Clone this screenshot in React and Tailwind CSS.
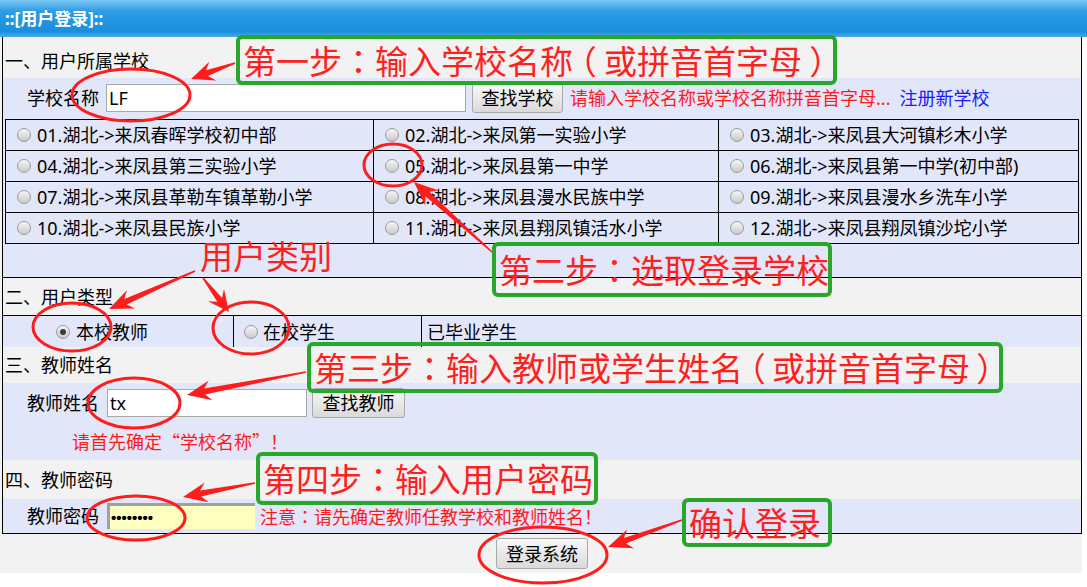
import React from "react";

const schools = [
  "01.湖北->来凤春晖学校初中部",
  "02.湖北->来凤第一实验小学",
  "03.湖北->来凤县大河镇杉木小学",
  "04.湖北->来凤县第三实验小学",
  "05.湖北->来凤县第一中学",
  "06.湖北->来凤县第一中学(初中部)",
  "07.湖北->来凤县革勒车镇革勒小学",
  "08.湖北->来凤县漫水民族中学",
  "09.湖北->来凤县漫水乡洗车小学",
  "10.湖北->来凤县民族小学",
  "11.湖北->来凤县翔凤镇活水小学",
  "12.湖北->来凤县翔凤镇沙坨小学",
];

function Radio({ checked }) {
  return (
    <span className="inline-flex w-[14px] h-[14px] shrink-0 rounded-full border border-[#9c9c9c] bg-linear-to-b from-[#f6f6f6] to-[#c9c9c9] items-center justify-center">
      {checked && <span className="w-[6px] h-[6px] rounded-full bg-[#3a3a3a]" />}
    </span>
  );
}

function Btn({ className, children }) {
  return (
    <div
      className={`flex items-center justify-center border border-[#a9a9a9] rounded-[3px] bg-linear-to-b from-[#f8f8f8] to-[#dadada] text-[18px] leading-none text-black ${className}`}
    >
      {children}
    </div>
  );
}

function arrowPoints(x1, y1, x2, y2) {
  const dx = x2 - x1;
  const dy = y2 - y1;
  const L = Math.hypot(dx, dy);
  const ux = dx / L;
  const uy = dy / L;
  const nx = -uy;
  const ny = ux;
  const head = Math.min(22, L * 0.45);
  const bx = x2 - ux * head;
  const by = y2 - uy * head;
  const sx = bx + ux * 4;
  const sy = by + uy * 4;
  const pts = [
    [x1 + nx * 0.8, y1 + ny * 0.8],
    [sx + nx * 3, sy + ny * 3],
    [bx - ux * 2 + nx * 10, by - uy * 2 + ny * 10],
    [x2, y2],
    [bx - ux * 2 - nx * 10, by - uy * 2 - ny * 10],
    [sx - nx * 3, sy - ny * 3],
    [x1 - nx * 0.8, y1 - ny * 0.8],
  ];
  return pts.map((p) => p.map((v) => v.toFixed(1)).join(",")).join(" ");
}

const arrows = [
  [235, 63, 191, 79],
  [492, 252, 414, 182],
  [195, 271, 109, 309],
  [203, 278, 229, 312],
  [306, 372, 187, 395],
  [255, 483, 183, 497],
  [682, 520, 608, 547],
];

const ellipses = [
  [131, 95, 59, 26],
  [393, 165, 29, 21],
  [72, 327, 39, 24],
  [251, 328, 38, 26],
  [134, 403, 46, 25],
  [136, 518, 49, 22],
  [543, 555, 64, 28],
];

function Colon() {
  return <span className="font-['Noto_Sans_CJK_TC',sans-serif]">：</span>;
}
function Paren({ children }) {
  return (
    <span className="inline-block w-[33px] text-center [font-feature-settings:'halt']">{children}</span>
  );
}

function Note({ className, children }) {
  return (
    <div
      className={`absolute border-[4px] border-[#2aa62a] rounded-[6px] flex items-center pl-[3px] text-[33px] leading-none text-[#ff1f1f] whitespace-nowrap font-['Noto_Sans_CJK_SC',sans-serif] ${className}`}
    >
      {children}
    </div>
  );
}

export default function App() {
  return (
    <div className="relative w-[1087px] h-[587px] bg-white overflow-hidden text-black font-['Noto_Sans','Noto_Sans_CJK_SC',sans-serif]">
      <div className="h-[37px] bg-[linear-gradient(180deg,#7cc6f2_0%,#2c9de5_30%,#1a8edc_85%,#4aa8e8_100%)] flex items-center pl-[5px] text-white font-bold text-[17px] leading-none">
        ::[用户登录]::
      </div>

      <div className="w-[1082px] pl-[2px] bg-[#f2f2f2]">
        <div className="w-[1080px] border-x border-b border-black text-[18px]">
          <div className="h-[41px] pt-[13px] pl-[2px] leading-[22px]">一、用户所属学校</div>

          <div className="h-[39px] bg-[#e1e6f9] flex items-center pl-[24px]">
            <span className="leading-none">学校名称</span>
            <div className="ml-[7px] w-[360px] h-[28px] bg-white border border-[#a8a8a8] flex items-center pl-[2px] leading-none">
              LF
            </div>
            <Btn className="ml-[6px] w-[91px] h-[30px]">查找学校</Btn>
            <span className="ml-[7px] leading-none text-[#ff1a1a]">请输入学校名称或学校名称拼音首字母...</span>
            <span className="ml-[9px] leading-none text-[#1a1aff]">注册新学校</span>
          </div>

          <div className="bg-[#e1e6f9] pt-[2px] pb-[33px] px-[2px] border-b border-black">
            <div className="grid grid-cols-[368px_345px_360px] border-t border-l border-black">
              {schools.map((s) => (
                <div
                  key={s}
                  className="h-[31px] border-r border-b border-black flex items-center pl-[11px] gap-[6px] leading-none"
                >
                  <Radio />
                  <span>{s}</span>
                </div>
              ))}
            </div>
          </div>

          <div className="h-[38px] border-b border-black flex items-center pl-[2px] leading-none">二、用户类型</div>

          <div className="h-[31px] bg-[#e1e6f9] flex leading-none">
            <div className="w-[231px] border-r border-black flex items-center pl-[53px] gap-[6px]">
              <Radio checked />
              <span>本校教师</span>
            </div>
            <div className="w-[188px] border-r border-black flex items-center pl-[10px] gap-[5px]">
              <Radio />
              <span>在校学生</span>
            </div>
            <div className="flex items-center pl-[5px]">已毕业学生</div>
          </div>

          <div className="h-[36px] flex items-center pl-[2px] leading-none">三、教师姓名</div>

          <div className="h-[77px] bg-[#e1e6f9] pt-[4px]">
            <div className="h-[32px] flex items-center pl-[24px]">
              <span className="leading-none">教师姓名</span>
              <div className="ml-[8px] w-[200px] h-[28px] bg-white border border-[#a8a8a8] flex items-center pl-[2px] leading-none">
                tx
              </div>
              <Btn className="ml-[5px] w-[93px] h-[30px]">查找教师</Btn>
            </div>
            <div className="mt-[11px] h-[22px] pl-[69px] leading-[22px] text-[#ff1a1a] font-['Noto_Sans_CJK_SC',sans-serif]">
              请首先确定“学校名称”！
            </div>
          </div>

          <div className="h-[39px] flex items-center pl-[2px] leading-none">四、教师密码</div>

          <div className="h-[34px] bg-[#e1e6f9] flex items-center pl-[24px]">
            <span className="leading-none">教师密码</span>
            <div className="ml-[8px] w-[148px] h-[26px] bg-[#ffffc0] border-t-[3px] border-l-[3px] border-[#a0a0a0] flex items-center pl-[1px] font-['Liberation_Sans',sans-serif] font-bold text-[15px] leading-none">
              ••••••••
            </div>
            <span className="ml-[5px] leading-none text-[#ff1a1a]">
              注意<Colon />请先确定教师任教学校和教师姓名！
            </span>
          </div>
        </div>

        <div className="h-[39px] flex justify-center items-center">
          <Btn className="w-[92px] h-[31px]">登录系统</Btn>
        </div>
      </div>

      <svg className="absolute inset-0 pointer-events-none" width="1087" height="587" viewBox="0 0 1087 587">
        {ellipses.map(([cx, cy, rx, ry], i) => (
          <ellipse key={i} cx={cx} cy={cy} rx={rx} ry={ry} fill="none" stroke="#ff1c1c" strokeWidth="3" />
        ))}
        {arrows.map((a, i) => (
          <polygon key={i} points={arrowPoints(...a)} fill="#ff1c1c" />
        ))}
      </svg>

      <Note className="left-[236px] top-[35px] w-[601px] h-[50px]">
        第一步<Colon />输入学校名称<Paren>（</Paren>或拼音首字母<Paren>）</Paren>
      </Note>
      <Note className="left-[492px] top-[242px] w-[340px] h-[55px]">
        第二步<Colon />选取登录学校
      </Note>
      <Note className="left-[307px] top-[342px] w-[696px] h-[51px]">
        第三步<Colon />输入教师或学生姓名<Paren>（</Paren>或拼音首字母<Paren>）</Paren>
      </Note>
      <Note className="left-[256px] top-[452px] w-[342px] h-[53px]">
        第四步<Colon />输入用户密码
      </Note>
      <Note className="left-[682px] top-[498px] w-[150px] h-[49px]">确认登录</Note>
      <div className="absolute left-[200px] top-[239px] text-[33px] leading-none text-[#ff1f1f] whitespace-nowrap font-['Noto_Sans_CJK_SC',sans-serif]">
        用户类别
      </div>
    </div>
  );
}
